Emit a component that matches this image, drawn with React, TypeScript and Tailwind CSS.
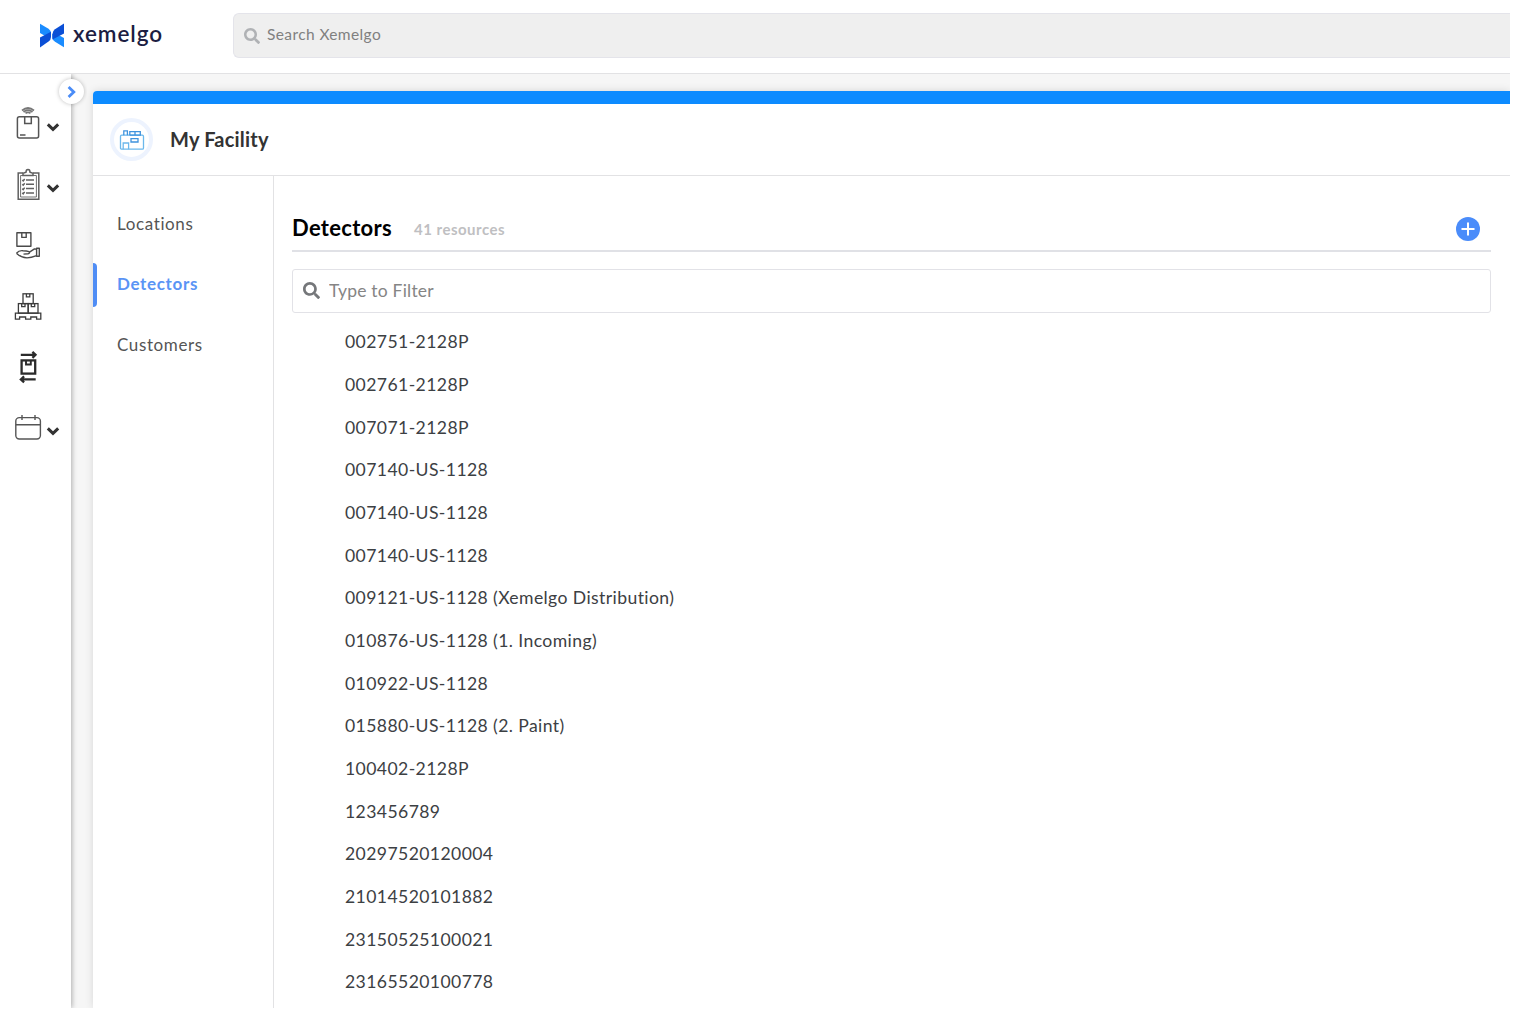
import React, { useState } from "react";
import { FaSearch } from "react-icons/fa";

const detectors = [
  { id: 1, name: "002751-2128P" },
  { id: 2, name: "002761-2128P" },
  { id: 3, name: "007071-2128P" },
  { id: 4, name: "007140-US-1128" },
  { id: 5, name: "007140-US-1128" },
  { id: 6, name: "007140-US-1128" },
  { id: 7, name: "009121-US-1128 (Xemelgo Distribution)" },
  { id: 8, name: "010876-US-1128 (1. Incoming)" },
  { id: 9, name: "010922-US-1128" },
  { id: 10, name: "015880-US-1128 (2. Paint)" },
  { id: 11, name: "100402-2128P" },
  { id: 12, name: "123456789" },
  { id: 13, name: "20297520120004" },
  { id: 14, name: "21014520101882" },
  { id: 15, name: "23150525100021" },
  { id: 16, name: "23165520100778" },
];

const tabs = ["Locations", "Detectors", "Customers"];

const Logo = () => (
  <svg width="25" height="25" viewBox="0 0 25 25">
    <path d="M1 0.8L9.5 5.8Q12 7.5 12 10.5V14L7 13.5L1 10Z" fill="#1a8cff" />
    <path d="M1 24.5V14.4L12 8.8V14Q12 16.8 9.5 18.6Z" fill="#0b4fd6" />
    <path d="M25 24.2L16 18.8Q13.4 17.2 13.4 14.5V11L18.5 11.4L25 15Z" fill="#1a8cff" />
    <path d="M25 0.5V10.6L13.4 16.6V11Q13.4 8 16 6.2Z" fill="#0b4fd6" />
  </svg>
);

const Chevron = () => (
  <svg width="14" height="10" viewBox="0 0 14 10" fill="none">
    <path d="M1.8 2.4L7 7.4L12.2 2.4" stroke="#333" strokeWidth="3" />
  </svg>
);

const AssetIcon = () => (
  <svg width="28" height="36" viewBox="0 0 28 36" fill="none" stroke="#555" strokeWidth="1.5">
    <path d="M8 4.5Q14 -0.5 20 4.5M9.5 6Q14 2.2 18.5 6M11.5 7.3Q14 5.5 16.5 7.3" stroke="#777" strokeWidth="1.7" />
    <rect x="3.4" y="10.7" width="21.2" height="21.3" rx="2" />
    <path d="M10.7 10.7V17.4H17.3V10.7M6 28.9H11.5" />
  </svg>
);

const OrderIcon = () => (
  <svg width="28" height="36" viewBox="0 0 28 36" fill="none" stroke="#606060" strokeWidth="1.5">
    <path d="M9 6H4.2V32.3H24.8V6H19" />
    <path d="M9 8.5H6.6V30H22.4V8.5H19" strokeWidth="0.9" />
    <path d="M9 8.5V6.3L12 5.3Q12 2.6 14 2.6T16 5.3L19 6.3V8.5Z" />
    <path d="M12 13H20M12 17.3H20M12 21.6H20M12 25.9H20" />
    <path d="M8.3 13L9.2 13.9L10.7 12M8.3 17.3L9.2 18.2L10.7 16.3M8.3 21.6L9.2 22.5L10.7 20.6M8.3 25.9L9.2 26.8L10.7 24.9" />
  </svg>
);

const InventoryIcon = () => (
  <svg width="28" height="36" viewBox="0 0 28 36" fill="none" stroke="#4a4a4a" strokeWidth="1.4" strokeLinejoin="round">
    <rect x="2.9" y="4.8" width="14" height="13.4" />
    <path d="M7.8 4.8V9.4H12.2V4.8" />
    <path d="M2.5 25.2Q5 22.2 9 22.7Q12.5 22.9 15 23.7Q16.3 25.2 14 25.7L9.5 26.1M15.5 24.2L20.5 20.9L22.6 21.2M2.5 25.2Q7 29.7 13 29.9Q17 29.9 22.6 27.7" />
    <path d="M22.6 20.2H25.3V28.2H22.6Z" />
  </svg>
);

const PalletIcon = () => (
  <svg width="28" height="36" viewBox="0 0 28 36" fill="none" stroke="#3c3c3c" strokeWidth="1.3">
    <rect x="9" y="4.8" width="10.2" height="9.8" />
    <rect x="4.4" y="14.6" width="9.8" height="9.6" />
    <rect x="14.2" y="14.6" width="9.8" height="9.6" />
    <path d="M12.4 4.8V7.8H15.8V4.8M7.7 14.6V17.6H11V14.6M17.3 14.6V17.6H20.7V14.6" />
    <path d="M1.4 24.2H26.8V30.2H22.6V28H16.8V30.2H11.6V28H5.6V30.2H1.4Z" />
  </svg>
);

const TransferIcon = () => (
  <svg width="28" height="36" viewBox="0 0 28 36" fill="none" stroke="#2b2b2b" strokeWidth="2.3">
    <path d="M6.8 4.8H21.5M18.4 1.8L21.5 4.8L18.4 7.8" />
    <rect x="7.6" y="10.4" width="13.6" height="13.2" />
    <path d="M12 10.5V14.5H16.8V10.5" strokeWidth="1.9" />
    <path d="M21.7 29.4H6.9M10.1 26.4L6.9 29.4L10.1 32.4" />
  </svg>
);

const CalendarIcon = () => (
  <svg width="28" height="36" viewBox="0 0 28 36" fill="none" stroke="#555" strokeWidth="1.4">
    <rect x="1.8" y="7.6" width="24.6" height="21.4" rx="3.5" />
    <path d="M1.8 14.7H26.4M8 5V10M21 5V10" />
  </svg>
);

const FacilityIcon = () => (
  <svg width="26" height="22" viewBox="0 0 26 22" fill="none" stroke="#6bb8ec" strokeWidth="1.3">
    <rect x="1.5" y="6.2" width="23" height="14" rx="1.2" />
    <path d="M4.8 6.2V1.8H8.4V6.2M10.8 6.2V2.6H21.3V6.2H10.8M16 2.6V6.2" stroke="#3f93dd" />
    <path d="M4.2 20.2V14H9.6V20.2" />
    <path d="M12 9.6H19V13H12Z" stroke="#3f93dd" />
  </svg>
);

const sideItems = [
  { id: "assets", icon: <AssetIcon />, expandable: true },
  { id: "orders", icon: <OrderIcon />, expandable: true },
  { id: "inventory", icon: <InventoryIcon />, expandable: false },
  { id: "pallets", icon: <PalletIcon />, expandable: false },
  { id: "transfer", icon: <TransferIcon />, expandable: false },
  { id: "calendar", icon: <CalendarIcon />, expandable: true },
];

const App = () => {
  const [activeTab, setActiveTab] = useState("Detectors");
  const [search, setSearch] = useState("");
  const [filter, setFilter] = useState("");

  const filtered = detectors.filter((item) =>
    item.name.toLowerCase().includes(filter.toLowerCase())
  );

  return (
    <div className="h-[1014px] w-[1536px] overflow-hidden bg-white font-['Lato',sans-serif]">
      <div className="flex h-[1008px] w-[1510px] flex-col overflow-hidden">
        <header className="flex h-[74px] shrink-0 border-b border-[#e2e2e4]">
          <div className="flex w-[233px] shrink-0 items-start pl-[39px] pt-[23px]">
            <Logo />
            <span className="ml-[9px] -mt-[3px] text-[22.5px] leading-[28px] font-semibold tracking-[0.95px] text-[#1c1d42]">
              xemelgo
            </span>
          </div>
          <div className="mt-[13px] flex h-[45px] flex-1 items-center rounded-l-md border border-r-0 border-[#e4e4ea] bg-[#efefef] pl-[10px]">
            <FaSearch className="mt-[1px] size-4 text-[#b0b2b5]" />
            <input
              value={search}
              onChange={(e) => setSearch(e.target.value)}
              placeholder="Search Xemelgo"
              className="-mt-[2px] ml-[7px] flex-1 bg-transparent text-[15.5px] tracking-[0.4px] outline-none placeholder:text-[#808080]"
            />
          </div>
        </header>

        <div className="flex min-h-0 flex-1">
          <aside className="relative z-10 w-[71px] shrink-0 bg-white shadow-[1px_0_5px_rgba(0,0,0,0.3)] [clip-path:inset(0_-16px_0_0)]">
            <button className="absolute top-[5px] left-[59px] flex size-[25px] items-center justify-center rounded-full bg-white shadow-[0_0_4px_rgba(0,0,0,0.25)]">
              <svg width="10" height="14" viewBox="0 0 10 14" fill="none">
                <path d="M1.6 2L6.8 7L1.6 12" stroke="#4a8cf7" strokeWidth="2.8" />
              </svg>
            </button>
            <nav className="flex flex-col pt-[20px]">
              {sideItems.map((item) => (
                <div key={item.id} className="flex h-[60.8px] items-center pl-[14px]">
                  {item.icon}
                  {item.expandable && (
                    <span className="mt-[5px] ml-1">
                      <Chevron />
                    </span>
                  )}
                </div>
              ))}
            </nav>
          </aside>

          <div className="flex min-w-0 flex-1 bg-[#f6f6f6] pt-[17px] pl-[22px]">
            <div className="flex flex-1 flex-col rounded-tl bg-white shadow-[0_0_8px_rgba(0,0,0,0.13)]">
              <div className="h-[13px] shrink-0 rounded-tl bg-[#0d8bff]" />
              <div className="flex h-[72px] shrink-0 items-center border-b border-[#e2e2e4] pl-[17px]">
                <div className="flex size-[43px] items-center justify-center rounded-full border-4 border-[#edf3fe]">
                  <FacilityIcon />
                </div>
                <h1 className="-mt-[2px] ml-[17px] text-[20px] font-bold tracking-[0.2px] text-[#333]">
                  My Facility
                </h1>
              </div>

              <div className="flex min-h-0 flex-1">
                <div className="w-[181px] shrink-0 border-r border-[#e2e2e4] pt-[26px]">
                  {tabs.map((tab) => (
                    <button
                      key={tab}
                      onClick={() => setActiveTab(tab)}
                      className="mb-[16.8px] flex h-[44px] w-full items-center text-left"
                    >
                      <span
                        className={
                          tab === activeTab
                            ? "h-[44px] w-[4px] rounded-r bg-[#4f8df5]"
                            : "h-[44px] w-[4px]"
                        }
                      />
                      <span
                        className={
                          tab === activeTab
                            ? "-mt-[2px] ml-5 text-[17px] font-bold tracking-[0.65px] text-[#5a94f5]"
                            : "-mt-[1px] ml-5 text-[17px] tracking-[0.62px] text-[#555]"
                        }
                      >
                        {tab}
                      </span>
                    </button>
                  ))}
                </div>

                <main className="flex-1 pr-[19px] pl-[18px]">
                  <div className="flex h-[76px] items-end border-b-2 border-[#e0e1e6] pb-[8px]">
                    <h2 className="text-[22px] leading-[28px] font-bold tracking-[0.3px] text-black">
                      Detectors
                    </h2>
                    <span className="ml-[22px] text-[15px] leading-[25px] font-bold tracking-[0.5px] text-[#bfbfc2]">
                      41 resources
                    </span>
                    <button className="mr-[11px] mb-[1px] ml-auto">
                      <svg width="24" height="24" viewBox="0 0 24 24">
                        <circle cx="12" cy="12" r="12" fill="#4a8cfa" />
                        <path d="M12 5.5V18.5M5.5 12H18.5" stroke="#fff" strokeWidth="2" />
                      </svg>
                    </button>
                  </div>
                  <div className="mt-[17px] flex h-[44px] items-center rounded-[3px] border border-[#e2e2e7] pl-[10px]">
                    <FaSearch className="-mt-[1px] size-[17px] text-[#75777a]" />
                    <input
                      value={filter}
                      onChange={(e) => setFilter(e.target.value)}
                      placeholder="Type to Filter"
                      className="ml-[9px] flex-1 bg-transparent text-[17.5px] tracking-[0.2px] outline-none placeholder:text-[#858585]"
                    />
                  </div>
                  <ul className="pt-[8.2px] pl-[53px]">
                    {filtered.map((item) => (
                      <li
                        key={item.id}
                        className="flex h-[42.66px] items-center text-[17.6px] tracking-[0.4px] whitespace-nowrap text-[#3c4043]"
                      >
                        {item.name}
                      </li>
                    ))}
                  </ul>
                </main>
              </div>
            </div>
          </div>
        </div>
      </div>
    </div>
  );
};

export default App;
